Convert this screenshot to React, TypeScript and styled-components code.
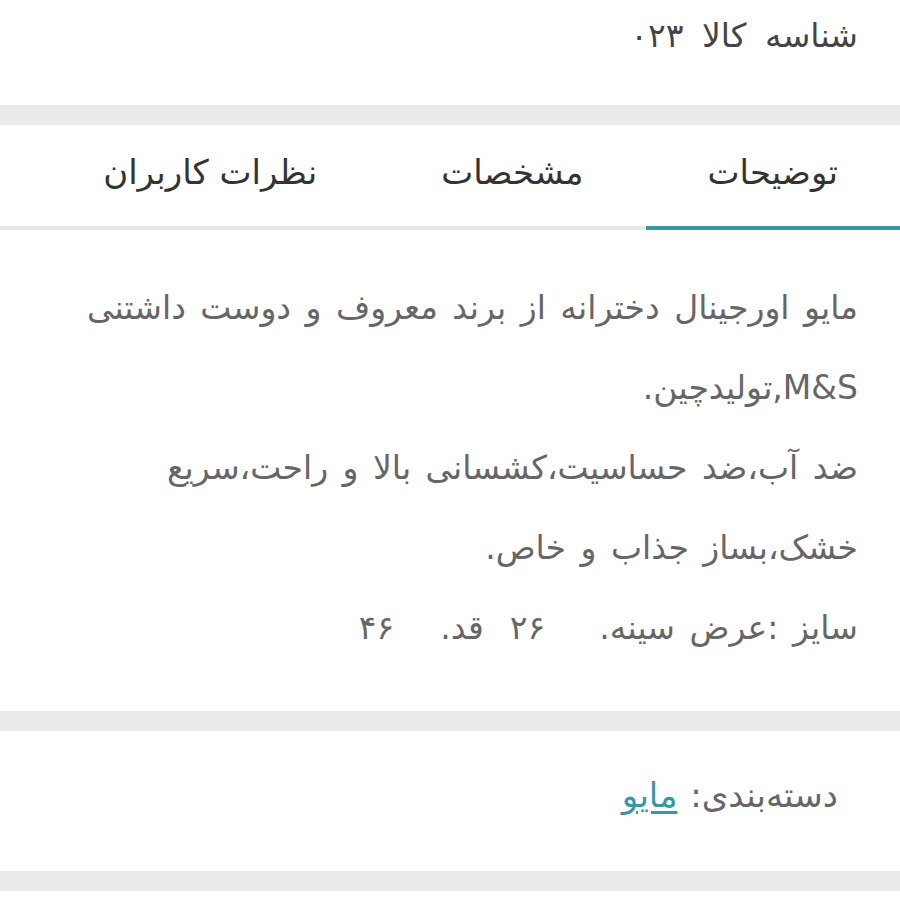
import React from "react";
import styled, { createGlobalStyle } from "styled-components";

const Global = createGlobalStyle`
  html, body { margin: 0; padding: 0; background: #ffffff; }
  body {
    font-family: "DejaVu Sans", sans-serif;
    direction: rtl;
  }
`;

const Page = styled.div`
  width: 900px;
  display: flex;
  flex-direction: column;
  background: #fff;
`;

const Section = styled.section<{ $h: number; $pr: number }>`
  height: ${(p) => p.$h}px;
  padding-right: ${(p) => p.$pr}px;
  display: flex;
  align-items: center;
  box-sizing: border-box;
`;

const Separator = styled.div`
  height: 20px;
  background: #ebebeb;
`;

const ProductId = styled.div`
  font-size: 33px;
  word-spacing: 8px;
  color: #444;
  margin-top: -34px;
`;

const Tabs = styled.nav`
  display: flex;
  height: 105px;
  border-bottom: 4px solid #e8e8e8;
  box-sizing: border-box;
`;

const Tab = styled.div<{ $active?: boolean }>`
  padding: 0 62px;
  display: flex;
  align-items: center;
  font-size: 34px;
  color: #333;
  margin-bottom: -4px;
  padding-bottom: 8px;
  border-bottom: 4px solid ${(p) => (p.$active ? "#3598a8" : "transparent")};
`;

const Description = styled.div`
  padding: 38px 42px 43px 42px;
  font-size: 33px;
  word-spacing: 4px;
  line-height: 80px;
  color: #666;
`;

const Line = styled.p`
  margin: 0;
  white-space: nowrap;
`;

const Gap = styled.span<{ $w: number }>`
  display: inline-block;
  width: ${(p) => p.$w}px;
`;

const Category = styled.div`
  font-size: 34px;
  word-spacing: 2px;
  color: #666;
  margin-top: -12px;
`;

const CatLink = styled.a`
  color: #3598a8;
  text-decoration: underline;
  text-underline-offset: 4px;
`;

export default function App() {
  return (
    <Page>
      <Global />
      <Section $h={105} $pr={42}>
        <ProductId>شناسه کالا ۰۲۳</ProductId>
      </Section>
      <Separator />
      <Tabs>
        <Tab $active>توضیحات</Tab>
        <Tab>مشخصات</Tab>
        <Tab>نظرات کاربران</Tab>
      </Tabs>
      <Description>
        <Line>
          مایو اورجینال دخترانه از برند معروف و دوست داشتنی
          <br />
          M&amp;S,تولیدچین.
        </Line>
        <Line>
          ضد آب،ضد حساسیت،کشسانی بالا و راحت،سریع
          <br />
          خشک،بساز جذاب و خاص.
        </Line>
        <Line>
          سایز :عرض سینه.<Gap $w={54} />۲۶<Gap $w={26} />قد.<Gap $w={46} />۴۶
        </Line>
      </Description>
      <Separator />
      <Section $h={140} $pr={62}>
        <Category>
          دسته‌بندی: <CatLink href="#">مایو</CatLink>
        </Category>
      </Section>
      <Separator />
    </Page>
  );
}
